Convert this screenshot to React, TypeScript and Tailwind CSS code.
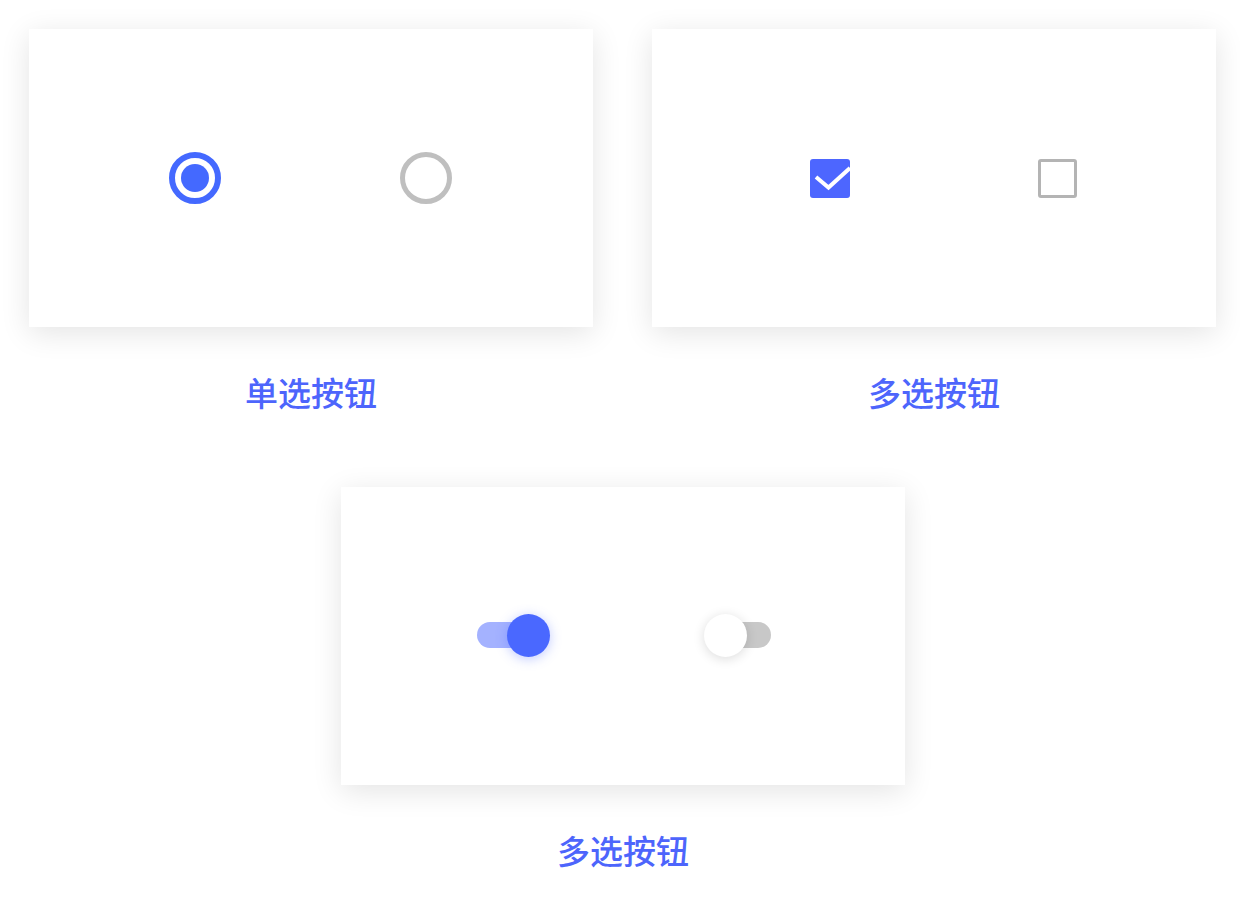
import React from 'react';

const font = { fontFamily: '"Noto Sans CJK SC", "Noto Sans", sans-serif' };

function Card({ children }: { children: React.ReactNode }) {
  return (
    <div className="w-[564px] h-[298px] bg-white shadow-[0_6px_28px_rgba(0,0,0,0.11)] flex items-center justify-center">
      {children}
    </div>
  );
}

function Label({ text }: { text: string }) {
  return (
    <div className="mt-[43px] h-[44px] leading-[44px] text-center text-[33px] font-medium text-[#4d65fc]" style={font}>
      {text}
    </div>
  );
}

function Radio({ checked }: { checked: boolean }) {
  return checked ? (
    <div className="w-[52px] h-[52px] rounded-full border-[6px] border-[#4469ff] flex items-center justify-center">
      <div className="w-[28px] h-[28px] rounded-full bg-[#4469ff]" />
    </div>
  ) : (
    <div className="w-[52px] h-[52px] rounded-full border-[5px] border-[#bfbfbf]" />
  );
}

function Checkbox({ checked }: { checked: boolean }) {
  return checked ? (
    <div className="w-[40px] h-[39px] rounded-[3px] bg-[#4d66ff]">
      <svg width="40" height="39" viewBox="0 0 40 39">
        <path d="M6 18 L18.5 28.5 L40 9" fill="none" stroke="#fff" strokeWidth="4" />
      </svg>
    </div>
  ) : (
    <div className="w-[39px] h-[39px] rounded-[3px] border-[3px] border-[#b4b4b4]" />
  );
}

function Toggle({ on }: { on: boolean }) {
  return on ? (
    <div className="relative w-[73px] h-[43px] flex items-center">
      <div className="w-[66px] h-[26px] rounded-full bg-[#a4b2ff]" />
      <div className="absolute left-[30px] top-0 w-[43px] h-[43px] rounded-full bg-[#4a68ff] shadow-[0_2px_12px_rgba(74,104,255,0.35)]" />
    </div>
  ) : (
    <div className="relative w-[67px] h-[43px] flex items-center justify-end">
      <div className="w-[58px] h-[26px] rounded-full bg-[#c8c8c8]" />
      <div className="absolute left-0 top-0 w-[43px] h-[43px] rounded-full bg-white shadow-[0_2px_12px_rgba(0,0,0,0.14)]" />
    </div>
  );
}

export default function App() {
  return (
    <div className="w-[1240px] h-[916px] bg-white pt-[29px] pl-[29px]" style={font}>
      <div className="flex gap-[59px]">
        <div>
          <Card>
            <div className="flex items-center gap-[179px] ml-[-1px]">
              <Radio checked />
              <Radio checked={false} />
            </div>
          </Card>
          <Label text="单选按钮" />
        </div>
        <div>
          <Card>
            <div className="flex items-center gap-[188px] ml-[19px]">
              <Checkbox checked />
              <Checkbox checked={false} />
            </div>
          </Card>
          <Label text="多选按钮" />
        </div>
      </div>
      <div className="mt-[73px] ml-[312px] w-[564px]">
        <Card>
          <div className="flex items-center gap-[154px] ml-[2px] mt-[-2px]">
            <Toggle on />
            <Toggle on={false} />
          </div>
        </Card>
        <Label text="多选按钮" />
      </div>
    </div>
  );
}
